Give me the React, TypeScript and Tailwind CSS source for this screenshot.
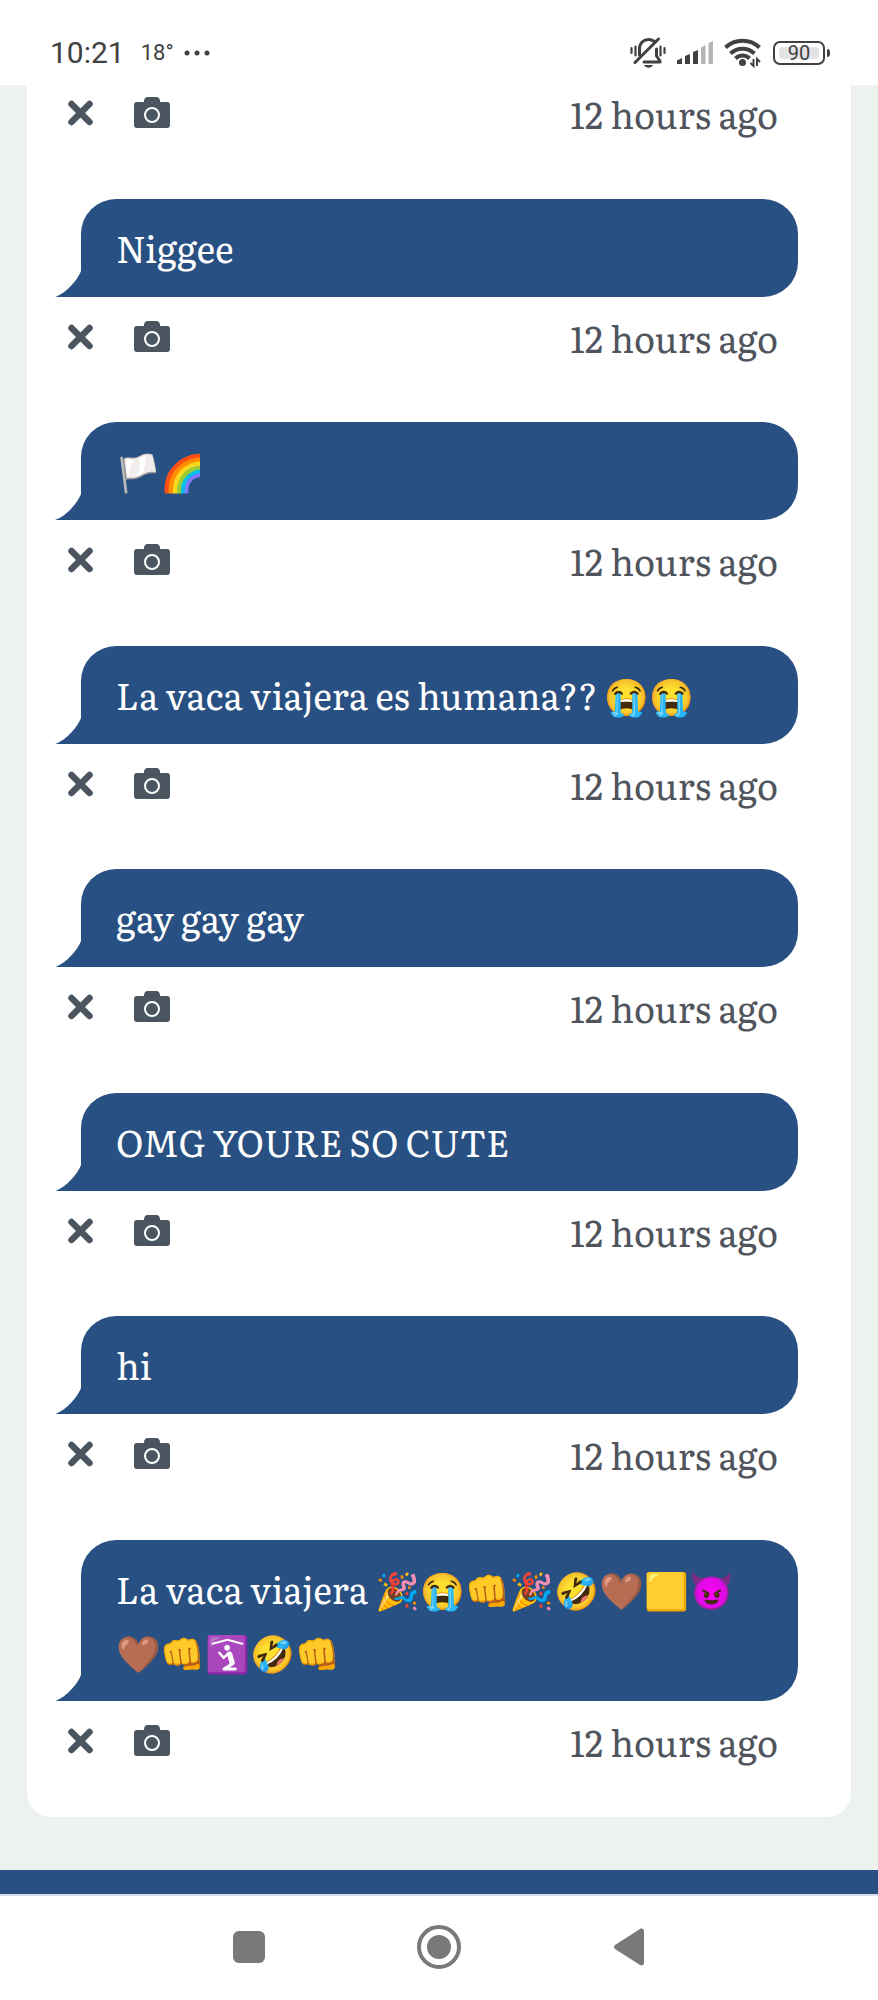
import React from 'react';

const messages = [
  'Niggee',
  '🏳️🌈',
  'La vaca viajera es humana?? 😭😭',
  'gay gay gay',
  'OMG YOURE SO CUTE',
  'hi',
  'La vaca viajera 🎉😭👊🎉🤣🤎🟨😈🤎👊🛐🤣👊',
];

const BellOffIcon = () => (
  <svg width="36" height="32" viewBox="0 0 36 32" fill="none" stroke="#414141" strokeLinecap="round" aria-hidden="true">
    <path d="M1.500 11v5M5.500 9.500v9M30.500 9.500v9M34.500 11v5" strokeWidth="2.200" />
    <path d="M9.500 18v-6c0-6 4-9.500 9-9.500 2.500 0 4.500 .800 6 2" strokeWidth="3" />
    <path d="M26.500 12v7l3.500 5v1H14" strokeWidth="3" strokeLinejoin="round" />
    <path d="M5 25.500 28.500 2" strokeWidth="3" />
    <path d="M14 28h9c-2 3.500-7 3.500-9 0z" fill="#414141" stroke="none" />
  </svg>
);

const SignalIcon = () => (
  <svg width="36" height="24" viewBox="0 0 36 24" aria-hidden="true">
    <g fill="#414141">
      <path d="M0 19.500 5 17v6H0z" />
      <path d="M8 15l5-2v10H8z" />
      <path d="M16 11l5-2v14h-5z" />
    </g>
    <g fill="#b5b5b5">
      <path d="M24 6.500 28.500 4v19H24z" />
      <path d="M31.500 2 36 0v23h-4.500z" />
    </g>
  </svg>
);

const WifiIcon = () => (
  <svg width="38" height="30" viewBox="0 0 38 30" fill="none" stroke="#414141" aria-hidden="true">
    <path d="M1.500 9.500C11 .500 26 .500 35.500 9.500" strokeWidth="4" />
    <path d="M6.500 15.500c7-6.500 17-6.500 24 0" strokeWidth="4" />
    <path d="M11.500 20.500c4-4 10-4 14 0" strokeWidth="4" />
    <circle cx="18.500" cy="24.500" r="3.500" fill="#414141" stroke="none" />
    <path d="M29.500 21v7l-3-3M33 28v-7l3 3" strokeWidth="2" />
  </svg>
);

const BatteryIcon = () => (
  <div className="flex items-center gap-0.5">
    <div className="flex h-6 w-[52px] items-center rounded-[7px] border-2 border-[#414141] p-1">
      <div className="flex h-full w-full items-center justify-center rounded-sm bg-[#e3e3e3] text-xl leading-none text-[#414141]">90</div>
    </div>
    <div className="h-2 w-[3px] rounded-r-sm bg-[#414141]" />
  </div>
);

const StatusBar = () => (
  <header className="flex h-[85px] items-center justify-between bg-white pt-5 pr-12 pl-[50px] font-['Roboto',sans-serif] text-[#414141]">
    <div className="flex items-center">
      <span className="text-[30px] leading-none">10:21</span>
      <span className="ml-4 text-[22px] leading-none">18°</span>
      <svg className="ml-2.5" width="26" height="6" viewBox="0 0 26 6" fill="#414141" aria-hidden="true">
        <circle cx="3" cy="3" r="2.500" />
        <circle cx="13" cy="3" r="2.500" />
        <circle cx="23" cy="3" r="2.500" />
      </svg>
    </div>
    <div className="flex items-center gap-[11px]">
      <BellOffIcon />
      <SignalIcon />
      <WifiIcon />
      <BatteryIcon />
    </div>
  </header>
);

const MessageActions = () => (
  <div className="flex h-12 items-center justify-between pr-5 pl-[14px]">
    <div className="flex items-center gap-10">
      <button type="button" aria-label="Delete message">
        <svg width="27" height="36" viewBox="0 0 27 36" fill="none" stroke="#4a5560" strokeWidth="6.500" strokeLinecap="round">
          <path d="M4.500 8 22.500 26M22.500 8 4.500 26" />
        </svg>
      </button>
      <button type="button" aria-label="Save as image">
        <svg width="36" height="36" viewBox="0 0 36 36">
          <path
            fill="#4a5560"
            d="M3 6h7V5c0-2 1.500-4 3.500-4h9C24.500 1 26 3 26 5v1h7c2 0 3 1 3 3v20c0 2-1 3-3 3H3c-2 0-3-1-3-3V9c0-2 1-3 3-3z"
          />
          <circle cx="18" cy="19" r="7" fill="none" stroke="#fff" strokeWidth="2" />
        </svg>
      </button>
    </div>
    <time className="text-[36px] leading-[48px] text-[#50545c]">12 hours ago</time>
  </div>
);

const Message = ({ text }: { text: string }) => (
  <article>
    <div className="relative ml-7 rounded-[35px] rounded-bl-none bg-[#285082] pt-[17px] pr-9 pb-[18px] pl-[35px] text-[36px] leading-[63px] text-white">
      <svg className="absolute right-full bottom-0" width="26" height="26" viewBox="0 0 26 26" fill="#285082" aria-hidden="true">
        <path d="M26 0C23 8 12 22 0 26h26z" />
      </svg>
      <p>{text}</p>
    </div>
    <div className="mt-[17px]">
      <MessageActions />
    </div>
  </article>
);

const NavigationBar = () => (
  <nav className="flex h-[106px] items-center justify-center border-t-2 border-[#d9dfee] bg-white pb-0.5">
    <div className="grid w-[65%] grid-cols-3 justify-items-center">
      <button type="button" aria-label="Recent apps" className="flex items-center">
        <span className="h-8 w-8 rounded-md bg-[#7a787a]" />
      </button>
      <button type="button" aria-label="Home" className="flex h-11 w-11 items-center justify-center rounded-full border-4 border-[#7a787a]">
        <span className="h-6 w-6 rounded-full bg-[#7a787a]" />
      </button>
      <button type="button" aria-label="Back">
        <svg width="30" height="38" viewBox="0 0 30 38" fill="#7a787a">
          <path d="M1 17 26 1c2-1 4 0 4 2v32c0 2-2 3-4 2L1 21c-1.300-1-1.300-3 0-4z" />
        </svg>
      </button>
    </div>
  </nav>
);

const App = () => (
  <div className="flex min-h-screen flex-col bg-[#edf2ee] font-['Literata','Liberation_Serif','Noto_Color_Emoji',serif]">
    <StatusBar />
    <main className="mx-[27px] mb-[53px] flex flex-1 flex-col justify-between rounded-b-3xl bg-white pt-[5px] pr-[53px] pb-[51px] pl-[26px]">
      <MessageActions />
      {messages.map((text, index) => (
        <Message key={index} text={text} />
      ))}
    </main>
    <footer>
      <div className="h-6 bg-[#285082]" />
      <NavigationBar />
    </footer>
  </div>
);

export default App;
